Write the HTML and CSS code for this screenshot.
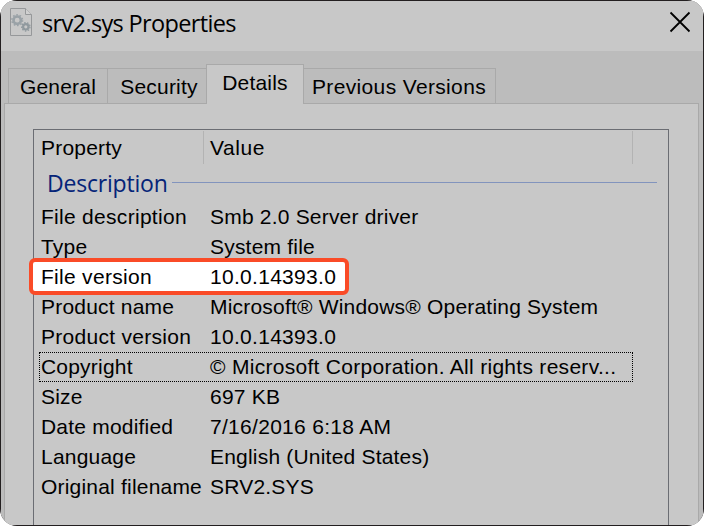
FILE: index.html
```
<!DOCTYPE html>
<html lang="en">
<head>
<meta charset="utf-8">
<title>srv2.sys Properties</title>
<link rel="stylesheet" href="styles.css">
</head>
<body>
<main class="window">
  <div class="surface">
    <header class="titlebar">
      <svg class="file-icon" width="24" height="30" viewBox="0 0 24 30">
        <path d="M1.5 .5H16.5L22.5 6.5V27.5H1.5Z" fill="#c8c8c8" stroke="#96989a"/>
        <path d="M16.5 .5V6.5H22.5" fill="#d0d0d0" stroke="#96989a"/>
        <circle cx="8.2" cy="12.2" r="3.7" fill="none" stroke="#9aa2a7" stroke-width="2.6"/>
        <circle cx="8.2" cy="12.2" r="5.4" fill="none" stroke="#9aa2a7" stroke-width="1.4" stroke-dasharray="1.7 1.7"/>
        <circle cx="16.8" cy="18.8" r="2.7" fill="none" stroke="#90999e" stroke-width="2.2"/>
        <circle cx="16.8" cy="18.8" r="4.2" fill="none" stroke="#90999e" stroke-width="1.3" stroke-dasharray="1.47 1.47"/>
      </svg>
      <h1 class="title">srv2.sys Properties</h1>
      <svg class="close" width="22" height="22" viewBox="0 0 22 22"><path d="M1.5 1.5L20.5 20.5M20.5 1.5L1.5 20.5" stroke="#000" stroke-width="1.8" fill="none"/></svg>
    </header>
    <nav class="tabs">
      <span class="tab general">General</span>
      <span class="tab security">Security</span>
      <span class="tab active">Details</span>
      <span class="tab previous">Previous Versions</span>
    </nav>
    <section class="panel">
      <div class="list">
        <div class="head"><span class="head-name">Property</span><span class="head-value">Value</span></div>
        <div class="group"><h2>Description</h2><i class="rule"></i></div>
        <div class="row"><span class="name wide">File description</span><span>Smb 2.0 Server driver</span></div>
        <div class="row"><span class="name">Type</span><span>System file</span></div>
        <div class="row marked"><span class="name wide">File version</span><span class="wide">10.0.14393.0</span></div>
        <div class="row"><span class="name">Product name</span><span>Microsoft® Windows® Operating System</span></div>
        <div class="row"><span class="name wide">Product version</span><span class="wide">10.0.14393.0</span></div>
        <div class="row focused"><span class="name">Copyright</span><span class="wide">© Microsoft Corporation. All rights reserv...</span></div>
        <div class="row"><span class="name">Size</span><span>697 KB</span></div>
        <div class="row"><span class="name">Date modified</span><span class="wide">7/16/2016 6:18 AM</span></div>
        <div class="row"><span class="name">Language</span><span>English (United States)</span></div>
        <div class="row"><span class="name">Original filename</span><span>SRV2.SYS</span></div>
      </div>
    </section>
  </div>
</main>
</body>
</html>
```
FILE: styles.css
```
* { box-sizing: border-box; }
body { margin: 0; background: #fff; overflow: hidden; color: #000; font: 21px/30px "Liberation Sans", Arial, sans-serif; letter-spacing: .2px; }
.window { width: 704px; height: 526px; padding: 1px; background: #231f20; border-radius: 17px; overflow: hidden; }
.surface { height: 524px; display: flex; flex-direction: column; background: #bcbcbc; overflow: hidden; }
.titlebar { flex: none; height: 50px; display: flex; align-items: flex-start; padding: 7px 12px 0 8px; background: #c8c8c8; }
.title { margin: 0 auto 0 9px; font: 400 23.5px/31px "Open Sans", "Segoe UI", sans-serif; letter-spacing: -.65px; white-space: nowrap; }
.close { margin-top: 3px; }
.tabs { flex: none; height: 53px; margin-bottom: -1px; padding-left: 7px; display: flex; align-items: flex-end; position: relative; }
.tab { height: 36px; border: 1px solid #a9a9a9; line-height: 36px; text-align: center; white-space: nowrap; }
.general { width: 100px; }
.security { width: 99px; margin-left: -1px; border-right: 0; padding-left: 4px; }
.active { width: 98px; height: 40px; background: #c8c8c8; border-bottom: 0; }
.previous { width: 192px; border-left: 0; text-align: left; padding-left: 8px; letter-spacing: .35px; }
.panel { flex: 1; margin: 0 4px 0 3px; padding: 25px 29px 0 28px; border: 1px solid #a9a9a9; border-bottom: 0; background: #c8c8c8; }
.list { height: 100%; border: 1px solid #6b6d73; border-bottom: 0; padding-left: 7px; }
.head { height: 36px; display: flex; padding-top: 1px; }
.head span { height: 33px; line-height: 34px; }
.head-name { width: 163px; border-right: 1px solid #b3b3b3; }
.head-value { width: 429px; padding-left: 6px; border-right: 1px solid #b3b3b3; letter-spacing: .6px; }
.group { height: 36px; display: flex; align-items: center; padding: 0 11px 0 6px; color: #052478; }
.group h2 { margin: -2px 0 0; width: 125px; font: 400 23px/34px "Open Sans", "Segoe UI", sans-serif; letter-spacing: -.2px; }
.rule { flex: 1; height: 1px; background: #8294bd; margin-top: -3px; }
.row { position: relative; height: 30px; display: flex; white-space: nowrap; }
.name { width: 169px; }
.wide { letter-spacing: .29px; }
.marked { z-index: 1; width: 320px; height: 37px; margin: -4px 0 -3px -12px; padding-left: 8px; border: 4px solid #fa4b27; border-radius: 6px; background: #fff; }
.focused { width: 594px; margin-left: -2px; padding-left: 1px; border: 1px dotted #000; line-height: 28px; }
```
